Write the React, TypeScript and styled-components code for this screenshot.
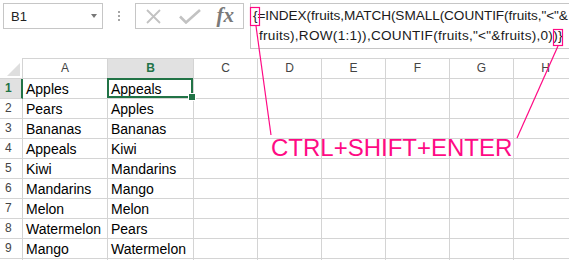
import React from 'react'
import styled, { createGlobalStyle, css } from 'styled-components'

const colors = {
  pink: '#ff0a84',
  green: '#217346',
  grid: '#d4d4d4',
  frame: '#c6c6c6',
  headerActive: '#e1e1e1',
  headerText: '#444',
  icon: '#c2c2c2',
}

const GlobalStyle = createGlobalStyle`
  html, body {
    margin: 0;
    background: #fff;
    overflow: hidden;
  }
  * {
    box-sizing: border-box;
  }
`

const Page = styled.div`
  position: relative;
  width: 569px;
  height: 260px;
  overflow: hidden;
  background: #fff;
  font-family: 'Liberation Sans', Arial, sans-serif;
  color: #000;
`

const TopBar = styled.div`
  display: flex;
  align-items: flex-start;
  height: 58px;
  padding: 3px 0 0 3px;
`

const NameBox = styled.div`
  display: flex;
  align-items: center;
  justify-content: space-between;
  width: 100px;
  height: 26px;
  padding: 0 5px 0 7px;
  border: 1px solid ${colors.frame};
  font-size: 13px;
  color: #222;
`

const Caret = styled.span`
  width: 0;
  height: 0;
  border-left: 3.5px solid transparent;
  border-right: 3.5px solid transparent;
  border-top: 4px solid #777;
`

const Grip = styled.div`
  display: flex;
  flex-direction: column;
  align-items: center;
  justify-content: center;
  gap: 2px;
  width: 32px;
  height: 26px;
`

const Dot = styled.span`
  width: 2px;
  height: 2px;
  background: #a6a6a6;
`

const ButtonGroup = styled.div`
  display: flex;
  align-items: center;
  width: 109px;
  height: 26px;
  border: 1px solid ${colors.frame};
`

const IconSlot = styled.div`
  flex: 1;
  display: flex;
  align-items: center;
  justify-content: center;
  height: 100%;
`

const Fx = styled.span`
  font-family: 'Liberation Serif', 'Times New Roman', serif;
  font-style: italic;
  font-weight: bold;
  font-size: 21px;
  line-height: 1;
  color: #7a7a7a;
  margin-top: -2px;
`

const FormulaBar = styled.div`
  flex: 1;
  height: 46px;
  margin-left: 6px;
  padding: 2px 0 0 2px;
  border: 1px solid ${colors.frame};
  border-right: none;
  overflow: hidden;
`

const FormulaLine = styled.div<{ $indent?: number; $spacing?: number }>`
  font-size: 13.6px;
  line-height: 20px;
  white-space: nowrap;
  color: #1a1a1a;
  padding-left: ${(p) => p.$indent ?? 0}px;
  letter-spacing: ${(p) => p.$spacing ?? 0}px;
`

const Sheet = styled.div`
  display: grid;
  grid-template-columns: 23px 85px 86px repeat(6, 64px);
  grid-template-rows: 21px repeat(10, 20px);
`

const BaseCell = styled.div`
  position: relative;
  border-right: 1px solid ${colors.grid};
  border-bottom: 1px solid ${colors.grid};
  overflow: hidden;
  white-space: nowrap;
`

const Corner = styled(BaseCell)``

const CornerMark = styled.svg`
  position: absolute;
  right: 2px;
  bottom: 2px;
`

const ColHeader = styled(BaseCell)<{ $active?: boolean }>`
  border-top: 1px solid ${colors.grid};
  text-align: center;
  font-size: 12px;
  line-height: 19px;
  color: ${colors.headerText};
  ${(p) =>
    p.$active &&
    css`
      background: ${colors.headerActive};
      color: ${colors.green};
      font-weight: bold;
    `}
`

const RowHeader = styled(BaseCell)<{ $active?: boolean }>`
  padding-left: 5px;
  font-size: 12px;
  line-height: 19px;
  color: ${colors.headerText};
  ${(p) =>
    p.$active &&
    css`
      background: ${colors.headerActive};
      color: ${colors.green};
      font-weight: bold;
      border-right: 2px solid ${colors.green};
    `}
`

const Cell = styled(BaseCell)<{ $selected?: boolean }>`
  padding-left: 3px;
  font-size: 14px;
  line-height: 20px;
  overflow: ${(p) => (p.$selected ? 'visible' : 'hidden')};
  ${(p) =>
    p.$selected &&
    css`
      &::before {
        content: '';
        position: absolute;
        top: -1px;
        left: -1px;
        right: 0;
        bottom: 0;
        border: 2px solid ${colors.green};
      }
      &::after {
        content: '';
        position: absolute;
        right: -3px;
        bottom: -3px;
        width: 6px;
        height: 6px;
        background: ${colors.green};
        border: 1px solid #fff;
        z-index: 1;
      }
    `}
`

const Annotation = styled.svg`
  position: absolute;
  inset: 0;
  pointer-events: none;
`

const Callout = styled.div`
  position: absolute;
  left: 271px;
  top: 136px;
  font-family: 'Liberation Sans', Arial, sans-serif;
  font-size: 24px;
  line-height: 24px;
  color: ${colors.pink};
  white-space: nowrap;
`

const columns = ['A', 'B', 'C', 'D', 'E', 'F', 'G', 'H']

const colA = ['Apples', 'Pears', 'Bananas', 'Appeals', 'Kiwi', 'Mandarins', 'Melon', 'Watermelon', 'Mango']
const colB = ['Appeals', 'Apples', 'Bananas', 'Kiwi', 'Mandarins', 'Mango', 'Melon', 'Pears', 'Watermelon']

const Toolbar = () => (
  <TopBar>
    <NameBox>
      <span>B1</span>
      <Caret />
    </NameBox>
    <Grip>
      <Dot />
      <Dot />
      <Dot />
    </Grip>
    <ButtonGroup>
      <IconSlot>
        <svg width="15" height="15" viewBox="0 0 15 15">
          <path d="M1 1 L14 14 M14 1 L1 14" stroke={colors.icon} strokeWidth="1.8" fill="none" />
        </svg>
      </IconSlot>
      <IconSlot>
        <svg width="22" height="15" viewBox="0 0 22 15">
          <path d="M1 7.5 L7 13.5 L21 1" stroke={colors.icon} strokeWidth="2.6" fill="none" />
        </svg>
      </IconSlot>
      <IconSlot>
        <Fx>fx</Fx>
      </IconSlot>
    </ButtonGroup>
    <FormulaBar>
      <FormulaLine $spacing={-0.06}>{'{=INDEX(fruits,MATCH(SMALL(COUNTIF(fruits,"<"&'}</FormulaLine>
      <FormulaLine $indent={6} $spacing={0.26}>
        {'fruits),ROW(1:1)),COUNTIF(fruits,"<"&fruits),0))}'}
      </FormulaLine>
    </FormulaBar>
  </TopBar>
)

const Grid = () => (
  <Sheet>
    <Corner>
      <CornerMark width="13" height="13" viewBox="0 0 13 13">
        <polygon points="13,0 13,13 0,13" fill="#dedede" />
      </CornerMark>
    </Corner>
    {columns.map((c) => (
      <ColHeader key={c} $active={c === 'B'}>
        {c}
      </ColHeader>
    ))}
    {Array.from({ length: 10 }, (_, r) => (
      <React.Fragment key={r}>
        <RowHeader $active={r === 0}>{r < 9 ? r + 1 : ''}</RowHeader>
        <Cell>{colA[r] ?? ''}</Cell>
        <Cell $selected={r === 0}>{colB[r] ?? ''}</Cell>
        {columns.slice(2).map((c) => (
          <Cell key={c} />
        ))}
      </React.Fragment>
    ))}
  </Sheet>
)

const App = () => {
  return (
    <>
      <GlobalStyle />
      <Page>
        <Toolbar />
        <Grid />
        <Annotation width="569" height="260" viewBox="0 0 569 260">
          <rect x="250.5" y="7.5" width="9" height="18" fill="none" stroke={colors.pink} strokeWidth="1.2" />
          <rect x="553.5" y="29.5" width="9" height="16" fill="none" stroke={colors.pink} strokeWidth="1.2" />
          <line x1="256" y1="26" x2="271" y2="135" stroke={colors.pink} strokeWidth="1.2" />
          <line x1="558" y1="46" x2="517" y2="138" stroke={colors.pink} strokeWidth="1.2" />
        </Annotation>
        <Callout>CTRL+SHIFT+ENTER</Callout>
      </Page>
    </>
  )
}

export default App
